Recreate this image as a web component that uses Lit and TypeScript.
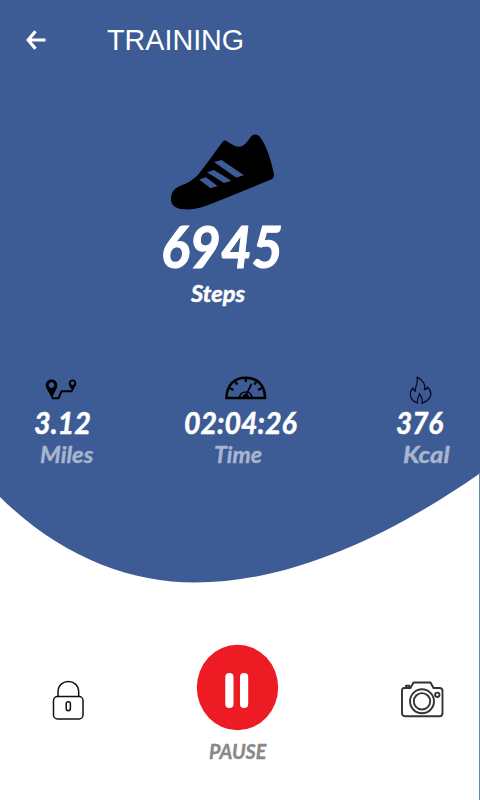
import { LitElement, html, css } from "lit";
import { customElement, property } from "lit/decorators.js";

@customElement("stat-item")
class StatItem extends LitElement {
  @property() value = "";
  @property() label = "";
  static styles = css`
    :host { display: flex; flex-direction: column; align-items: flex-start; font-family: "Lato", sans-serif; font-weight: 700; font-style: italic; white-space: nowrap; }
    .icon { height: 33px; display: flex; }
    .value { height: 32px; line-height: 32px; font-size: 30px; color: #fff; -webkit-text-stroke: 0.5px #fff; margin-left: var(--value-x, 0); transform: scaleX(var(--value-scale, 1)); transform-origin: 0 50%; }
    .label { height: 32px; line-height: 32px; font-size: 23px; color: #a9b4cf; -webkit-text-stroke: 0.4px #a9b4cf; margin-left: var(--label-x, 0); transform: scaleX(var(--label-scale, 1)); transform-origin: 0 50%; }
  `;
  render() {
    return html`
      <div class="icon"><slot></slot></div>
      <div class="value">${this.value}</div>
      <div class="label">${this.label}</div>
    `;
  }
}

@customElement("app-root")
class AppRoot extends LitElement {
  static styles = css`
    :host { display: block; width: 480px; height: 800px; }
    svg { display: block; overflow: visible; }
    .screen { position: relative; width: 480px; height: 800px; overflow: hidden; background: #fff; display: flex; flex-direction: column; isolation: isolate; }
    .backdrop { position: absolute; inset: 0; z-index: -1; }
    header { height: 80px; display: flex; align-items: center; padding-left: 26px; box-sizing: border-box; }
    .title { margin: 0 0 0 61px; font: 400 29px/40px "Liberation Sans", sans-serif; color: #fff; transform: scaleX(0.99); transform-origin: 0 50%; }
    .hero { height: 293px; display: flex; flex-direction: column; align-items: flex-start; font-family: "Lato", sans-serif; font-weight: 700; font-style: italic; color: #fff; }
    .shoe { margin: 54px 0 0 170px; }
    .count { margin: 4px 0 0 161px; height: 64px; line-height: 64px; font-size: 58px; -webkit-text-stroke: 1.1px #fff; transform: scaleX(0.925); transform-origin: 0 50%; }
    .unit { margin: -1px 0 0 191px; height: 32px; line-height: 32px; font-size: 23px; -webkit-text-stroke: 0.5px #fff; transform: scaleX(1.03); transform-origin: 0 50%; }
    .stats { display: grid; grid-template-columns: 160px 160px 160px; height: 267px; align-items: start; }
    .miles { --value-x: 34px; --label-x: 40px; --value-scale: 0.96; --label-scale: 1.03; }
    .time { --value-x: 24px; --label-x: 54px; --value-scale: 0.95; }
    .kcal { --value-x: 76px; --label-x: 83px; --value-scale: 0.93; --label-scale: 1.12; }
    .miles svg { margin-left: 45px; }
    .time svg { margin-left: 65px; }
    .kcal svg { margin-left: 89px; }
    .controls { display: grid; grid-template-columns: 160px 160px 160px; align-items: start; }
    button { border: 0; padding: 0; background: none; display: block; }
    .lock { margin: 40px 0 0 52px; }
    .camera { margin: 40px 0 0 80px; }
    .pause { margin: 4px 0 0 36px; }
    .pause-label { margin: 4px 0 0 49px; font: italic 700 21px/30px "Lato", sans-serif; color: #8a8788; -webkit-text-stroke: 0.4px #8a8788; transform: scaleX(0.94); transform-origin: 0 50%; white-space: nowrap; }
  `;
  render() {
    return html`
      <div class="screen">
        <svg class="backdrop" width="480" height="800" viewBox="0 0 480 800">
          <path fill="#3d5c95" d="M0 0H480V473.5L479 474C390 536 290 582.5 195 582.5C128 582.5 60 556 0 497Z" />
          <path fill="#5b8cc0" d="M479 474h1v326h-1z" />
        </svg>
        <header>
          <svg width="20" height="20" viewBox="0 0 20 20" fill="none" stroke="#fff" stroke-width="3.2">
            <path d="M19.500 10H2M9.500 1.300L2.200 10l7.300 8.700" />
          </svg>
          <h1 class="title">TRAINING</h1>
        </header>
        <section class="hero">
          <svg class="shoe" width="105" height="76" viewBox="0 0 105 76">
            <path d="M52.500 8Q54.500 5.500 57 7.500L65 12C71 14 75 11.500 79.500 4.500C82.500-.5 87.500-.5 90 3C97 12 101 27 104 40Q104.500 44 101 45.500L46 68C34 73 24 76 14 75.300C4 75 .5 70 1 64C1.500 57.500 5 54 11 51.500C18 49 24 45.500 29 39.500C37 29.500 44 19 52.500 8Z" />
            <g fill="#3d5c95">
              <path d="M44 28l7.500-2 22.500 15.200-8 2.200z" />
              <path d="M37 38.200l7-2.200 17.300 10.800-7.300 2.200z" />
              <path d="M29 45.500l7-2.200 11.500 8.700-7 2.200z" />
            </g>
          </svg>
          <div class="count">6945</div>
          <div class="unit">Steps</div>
        </section>
        <section class="stats">
          <stat-item class="miles" value="3.12" label="Miles">
            <svg width="32" height="30" viewBox="0 0 32 30">
              <path fill-rule="evenodd" d="M6.500 6.500C10 6.500 12.300 9 12.300 12C12.300 16 9 19 7 26C4.500 19 .7 16 .7 12C.7 9 3 6.500 6.500 6.500ZM6.500 9.300a2.800 2.800 0 1 0 .01 0Z" />
              <path fill-rule="evenodd" d="M27.500 6.500C30 6.500 31.300 8.300 31.300 10.200C31.300 13 29 14.500 27.500 18.500C26 14.500 23.700 13 23.700 10.200C23.700 8.300 25.500 6.500 27.500 6.500ZM27.500 8.300a1.800 1.800 0 1 0 .01 0Z" />
              <path d="M7 25.200h6.500l3-7h11" fill="none" stroke="#000" stroke-width="2" stroke-linejoin="round" />
            </svg>
          </stat-item>
          <stat-item class="time" value="02:04:26" label="Time">
            <svg width="42" height="28" viewBox="0 0 42 28" fill="none" stroke="#000">
              <path d="M1.500 25C1.500 12.500 9 4.700 20.800 4.700S40 12.500 40 25Z" stroke-width="2.600" />
              <path d="M20.800 5v4M10 8.500l2.500 3M31.700 8.500l-2.500 3M4.500 15l4 2M37 15l-4 2" stroke-width="2.200" />
              <path d="M14.500 25c.5-8 12-8 12.500 0M21.500 21L26.500 11" stroke-width="1.700" />
              <path d="M17.500 25c.5-5 6-5.500 6.500 0z" fill="#000" />
            </svg>
          </stat-item>
          <stat-item class="kcal" value="376" label="Kcal">
            <svg width="24" height="31" viewBox="0 0 24 31" fill="none" stroke="#050c23" stroke-width="1.300" stroke-linejoin="round">
              <path d="M8 4.200C14 7 17 12 15.500 16.500C17.500 16.500 18 15.500 18.500 14C25 21 21.500 27 12.800 30.300C14.500 26 12 24 10.500 20.500C10 24 7.500 26 8.500 30C.5 27 -.5 20 4 15C4.500 17 4.500 17.500 6.500 18C5.500 14 10 9 8 4.200Z" />
            </svg>
          </stat-item>
        </section>
        <section class="controls">
          <button class="lock" aria-label="Lock">
            <svg width="33" height="41" viewBox="0 0 33 41" fill="none" stroke="#111" stroke-width="1.500">
              <rect x="1.500" y="16.500" width="29.500" height="22.500" rx="4" />
              <path d="M6 16.500V12C6 -2 26.700 -2 26.700 12V16.500" />
              <rect x="14.200" y="21.700" width="4.200" height="9" rx="2.100" />
            </svg>
          </button>
          <div>
            <button class="pause" aria-label="Pause">
              <svg width="84" height="88" viewBox="0 0 84 88">
                <ellipse cx="41.500" cy="43.500" rx="40.700" ry="42.700" fill="#ed1c24" />
                <rect x="29.300" y="29" width="8.200" height="35" rx="4" fill="#fff" />
                <rect x="44" y="29" width="8.200" height="35" rx="4" fill="#fff" />
              </svg>
            </button>
            <div class="pause-label">PAUSE</div>
          </div>
          <button class="camera" aria-label="Camera">
            <svg width="44" height="40" viewBox="0 0 44 40" fill="none" stroke="#333" stroke-width="1.900" stroke-linejoin="round">
              <path d="M4 8H10.500L13.500 2.500H30.500L33.500 8H39.500Q42.500 8 42.500 11V33Q42.500 36.200 39.500 36.200H5Q2 36.200 2 33V11Q2 8 4 8Z" />
              <path d="M6 8V5.800H9.500V8" />
              <circle cx="22" cy="21.300" r="12" />
              <circle cx="22" cy="21.300" r="8.200" />
              <circle cx="37.300" cy="14.800" r="2.200" />
            </svg>
          </button>
        </section>
      </div>
    `;
  }
}
